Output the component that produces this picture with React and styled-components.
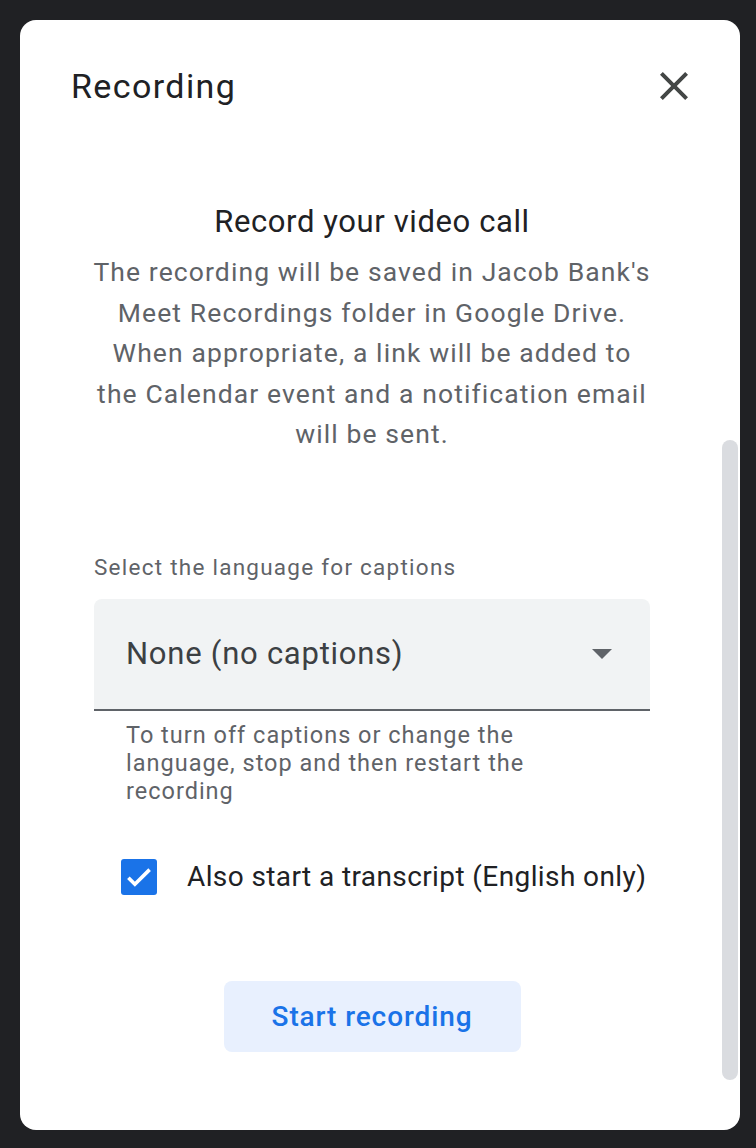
import React from 'react';
import styled, {createGlobalStyle} from 'styled-components';

const GlobalStyle = createGlobalStyle`
  html, body {
    margin: 0;
    padding: 0;
    background: #202124;
  }
  body {
    font-family: Roboto, "Liberation Sans", Arial, sans-serif;
    -webkit-font-smoothing: antialiased;
  }
`;

const Panel = styled.div`
  position: relative;
  box-sizing: border-box;
  margin: 20px;
  width: 720px;
  height: 1110px;
  background: #fff;
  border-radius: 16px;
  overflow: hidden;
`;

const Header = styled.div`
  display: flex;
  align-items: center;
  justify-content: space-between;
  height: 40px;
  padding: 46px 42px 0 51px;
`;

const Title = styled.h1`
  margin: 0;
  font-size: 34px;
  font-weight: 400;
  line-height: 40px;
  color: #202124;
  letter-spacing: 1.4px;
`;

const CloseButton = styled.button`
  display: flex;
  align-items: center;
  justify-content: center;
  width: 48px;
  height: 48px;
  padding: 0;
  border: none;
  background: none;
  cursor: pointer;
`;

const Content = styled.div`
  display: flex;
  flex-direction: column;
  padding: 0 90px 0 74px;
`;

const Heading = styled.h2`
  margin: 98px 0 0;
  font-size: 31px;
  font-weight: 400;
  line-height: 36px;
  text-align: center;
  color: #202124;
  letter-spacing: 0.6px;
`;

const Description = styled.p`
  margin: 12px -10px 0;
  font-size: 26.5px;
  line-height: 40.5px;
  text-align: center;
  color: #5f6368;
  letter-spacing: 1.1px;
`;

const FieldLabel = styled.div`
  margin-top: 98px;
  font-size: 22.5px;
  line-height: 28px;
  color: #5f6368;
  letter-spacing: 1.25px;
`;

const Select = styled.div`
  display: flex;
  align-items: center;
  justify-content: space-between;
  box-sizing: border-box;
  margin-top: 18px;
  height: 112px;
  padding: 0 38px 0 32px;
  background: #f1f3f4;
  border-radius: 8px 8px 0 0;
  border-bottom: 2px solid #5f6368;
  font-size: 31px;
  letter-spacing: 0.75px;
  color: #3c4043;
`;

const Caret = styled.span`
  width: 0;
  height: 0;
  border-left: 10px solid transparent;
  border-right: 10px solid transparent;
  border-top: 10px solid #5f6368;
`;

const Helper = styled.div`
  margin-top: 10px;
  padding: 0 100px 0 32px;
  font-size: 23.5px;
  line-height: 28px;
  color: #5f6368;
  letter-spacing: 1px;
`;

const CheckRow = styled.label`
  display: flex;
  align-items: center;
  gap: 30px;
  margin-top: 54px;
  padding-left: 27px;
  font-size: 28px;
  line-height: 36px;
  color: #202124;
  letter-spacing: 0.4px;
`;

const Box = styled.span`
  display: flex;
  align-items: center;
  justify-content: center;
  width: 36px;
  height: 36px;
  border-radius: 3px;
  background: ${p => (p.checked ? '#1a73e8' : '#fff')};
`;

const Actions = styled.div`
  display: flex;
  justify-content: center;
  margin-top: 86px;
`;

const PrimaryButton = styled.button`
  width: 297px;
  height: 71px;
  border: none;
  border-radius: 8px;
  background: #e8f0fe;
  color: #1a73e8;
  font-family: Roboto, "Liberation Sans", Arial, sans-serif;
  font-size: 28px;
  font-weight: 500;
  letter-spacing: 0.9px;
  cursor: pointer;
`;

const Scrollbar = styled.div`
  position: absolute;
  top: 420px;
  right: 2px;
  width: 16px;
  height: 640px;
  border-radius: 8px;
  background: #dadce0;
`;

function CloseIcon() {
  return (
    <svg width="48" height="48" viewBox="0 0 24 24">
      <path
        fill="#444746"
        d="M19 6.41L17.59 5 12 10.59 6.41 5 5 6.41 10.59 12 5 17.59 6.41 19 12 13.41 17.59 19 19 17.59 13.41 12z"
      />
    </svg>
  );
}

function CheckIcon() {
  return (
    <svg width="34" height="34" viewBox="0 0 24 24">
      <path d="M4.5 12.5l4.6 4.6L19.5 6.8" fill="none" stroke="#fff" strokeWidth="2.6" />
    </svg>
  );
}

export default function App() {
  const [transcript, setTranscript] = React.useState(true);

  return (
    <>
      <GlobalStyle />
      <Panel>
        <Header>
          <Title>Recording</Title>
          <CloseButton aria-label="Close">
            <CloseIcon />
          </CloseButton>
        </Header>
        <Content>
          <Heading>Record your video call</Heading>
          <Description>
            The recording will be saved in Jacob Bank's<br />
            Meet Recordings folder in Google Drive.<br />
            When appropriate, a link will be added to<br />
            the Calendar event and a notification email<br />
            will be sent.
          </Description>
          <FieldLabel>Select the language for captions</FieldLabel>
          <Select>
            <span>None (no captions)</span>
            <Caret />
          </Select>
          <Helper>
            To turn off captions or change the language, stop and then restart the recording
          </Helper>
          <CheckRow onClick={() => setTranscript(!transcript)}>
            <Box checked={transcript}>{transcript && <CheckIcon />}</Box>
            Also start a transcript (English only)
          </CheckRow>
          <Actions>
            <PrimaryButton>Start recording</PrimaryButton>
          </Actions>
        </Content>
        <Scrollbar />
      </Panel>
    </>
  );
}
